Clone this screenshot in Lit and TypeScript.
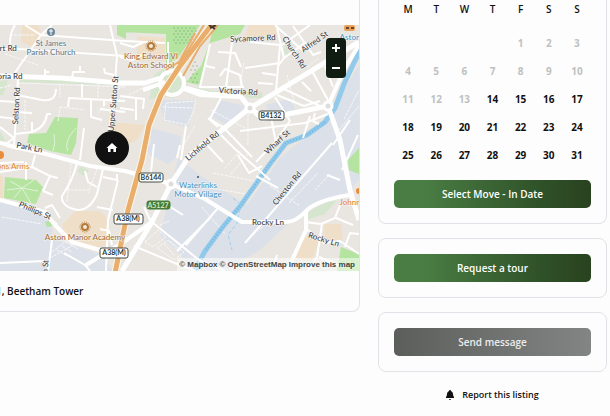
import { LitElement, html, css, svg } from "lit";
import { customElement } from "lit/decorators.js";

const WEEKDAYS = ["M", "T", "W", "T", "F", "S", "S"];
const FIRST_OFFSET = 4;
const FIRST_AVAILABLE = 14;
const weeks: (number | null)[][] = Array.from({ length: 5 }, (_, w) =>
  Array.from({ length: 7 }, (_, d) => {
    const n = w * 7 + d - FIRST_OFFSET + 1;
    return n > 0 ? n : null;
  })
);

const MINOR_ROADS = [
  "M15 25Q9 34 10 49M25 25L41 35L125 41L165 43M52 25L41 35L14 74M0 49L18 49L125 56",
  "M110 25L117 56L115 83L109 132M45 79V69M45 72H49M72 79L73 72H85M80 72V66M114 75L105 73L104 68",
  "M18 77L17 100L14 147M17 95L42 100Q56 102 56 89M16 112L32 113M0 117L16 119M0 101L17 102M15 134L32 132Q45 128 47 114H51M32 132V122M0 127L14 138L6 144",
  "M68 107L69 98L125 101M82 97V84M91 117V99M104 99V106M102 120L91 117M84 128L80 160M125 112L100 109",
  "M35 155L32 167L0 172M32 167L50 176L43 191M50 176L58 178M43 191L53 195M77 163Q73 180 62 196Q61 207 78 210Q90 210 97 194L103 169M85 171L88 182L97 187M103 177L117 180V174M97 207L113 210M0 163L24 162M26 162V180",
  "M45 208L52 205L60 218M52 240L48 271M0 263L45 261M64 253L85 265L90 271M43 214L57 224M100 229L109 231L112 245M118 180L108 220L106 271",
  "M168 42V75M120 57L132 60L144 54M120 43L133 47L144 42M120 96L144 99L143 109M136 98V120M120 108L134 110M154 144L150 181M186 126L181 160",
  "M210 44L200 87H244M206 66L215 68M218 52L235 53L241 67M225 95L233 35M220 76L225 69L240 75L242 87M250 42L280 45L276 91M245 68L280 63M282 45L310 25M258 83L273 84M262 73L276 75",
  "M277 28L284 58L278 66M293 26L313 55L321 52M301 48L313 45M284 58L306 42M325 66L333 87M312 71L329 102M277 95L304 106L320 101M284 89L322 107M302 82L311 91M275 97L290 121M240 131L305 123L328 114M315 113L313 121L319 124",
  "M221 98L210 119L227 130M208 118L218 127M186 160L246 112M221 135L235 149L270 180M222 126L252 157M270 112L276 143M290 121L275 142L256 162M310 116L303 138",
  "M161 201L183 215M152 222L199 260L225 271M134 246L177 264L196 271M177 251L210 218M186 245L218 208M144 207L152 224M180 145L177 158M207 145L223 162M238 155L249 173L262 166M256 176L278 188",
  "M305 222L321 224L335 218L340 205M336 218L353 225M322 224L317 257L308 271M345 247L350 233L359 234M319 257L340 266M308 230L324 243L340 241L359 254M272 271L277 255M340 180L327 175M350 120L333 145M342 170L358 135"
];

const PATHS = [
  "M18 83L125 87M60 84V97M98 83V97M60 107L85 110M58 121L60 107M122 85L98 113M0 88L13 85M25 100V130M5 54L38 65M10 35H35M125 97L147 86",
  "M166 103L196 101L193 113L187 125L164 120ZM163 107L192 108M211 110L245 128M195 126L181 149M248 106V145M240 85L244 63M287 75L294 101M308 67L318 58M344 119L359 90M339 130L360 105",
  "M145 242L158 230L166 237L153 247ZM157 248L168 240L184 252L174 260ZM164 244L175 256M169 241L180 253M160 225L169 221M240 151L224 169M248 154L230 175M213 173L254 181M210 188L247 194M202 207L225 234",
  "M52 252L69 239M50 258L75 244M57 250L67 256M62 246L72 252M66 242L78 249M71 163L67 202M97 169L88 193M67 190H88M7 147L20 150M2 217L42 224M270 186L300 206M289 203L318 173M315 190L330 174M268 222L245 242"
];

@customElement("area-map")
class AreaMap extends LitElement {
  static styles = css`
    :host { display: block; position: relative; height: 246px; overflow: hidden; }
    svg { display: block; }
    .map { width: 100%; height: 100%; font-family: Lato, "Liberation Sans", sans-serif; font-size: 8px; font-weight: 500; }
    .minor { fill: none; stroke: #fff; stroke-width: 2; stroke-linejoin: round; }
    .path { fill: none; stroke: #f8f8f7; stroke-width: 1; stroke-dasharray: 3 1; }
    .mid { fill: none; stroke: #fff; stroke-width: 4; stroke-linejoin: round; }
    .major { fill: none; stroke: #fff; stroke-width: 5; stroke-linejoin: round; }
    .case { fill: none; stroke: #fff8e9; stroke-width: 7; }
    .motorway { fill: none; stroke: #e9ad6c; stroke-width: 5; }
    .slip { fill: none; stroke: #e9ad6c; stroke-width: 2; }
    .water { fill: none; stroke: #92caeb; stroke-width: 5; stroke-linejoin: round; }
    .ripple { fill: none; stroke: #70b4df; stroke-width: 2; stroke-dasharray: 1 2; }
    .park { fill: #b5e4a0; }
    .grass { fill: #d5e5ce; }
    .school { fill: #f0dfc8; }
    .works { fill: #dce1e9; }
    .label { fill: #3e4145; stroke: #f8f8f6; stroke-width: 1; paint-order: stroke; text-anchor: middle; }
    .church { fill: #607c91; }
    .place { fill: #a66b35; }
    .pub { fill: #df8635; }
    .blue { fill: #4b96c7; }
    .shield { fill: #fff; stroke: #424c44; stroke-width: 1; }
    .green { fill: #427c39; stroke: #427c39; }
    .code { font-size: 7px; font-weight: 700; fill: #2c382f; text-anchor: middle; }
    .code-light { fill: #d6e9be; }
    .zoom { position: absolute; top: 13px; right: 13px; width: 20px; display: grid; border-radius: 4px; overflow: hidden; background: #101c12; }
    .zoom button { height: 20px; padding: 0; border: 0; background: none; display: grid; place-items: center; }
    .zoom svg { width: 10px; height: 10px; stroke: #fff; stroke-width: 2; }
    .credit { position: absolute; right: 0; bottom: 0; display: flex; gap: 2px; padding: 0 4px 0 2px; background: rgba(255,255,255,.5); font: 700 8px/13px "Liberation Sans", sans-serif; white-space: nowrap; }
    .credit a { color: #404642; text-decoration: none; }
  `;

  render() {
    return html`
      <svg class="map" viewBox="-20 25 379 246" preserveAspectRatio="xMaxYMid slice" role="img" aria-label="Map of Aston">
        <rect x="-20" y="25" width="400" height="246" fill="#e9e6e1"></rect>
        <path class="works" d="M0 201L45 215L53 230L50 240L70 253L105 266V271H-20V201ZM158 100H195L188 128L165 121ZM151 128L181 136L180 152L150 148ZM220 100L245 106L228 126L211 116ZM178 158L210 182L250 207L240 240L230 271H196L160 235ZM359 65V180L345 195L310 206L290 222L260 250L225 271L210 250L245 208L280 158L320 125L335 105ZM265 105L290 99L298 114L275 118Z"></path>
        <path class="works" d="M145 145L178 146L176 158L168 164L150 155ZM20 228L102 255L113 271H0V205Z"></path>
        <path class="school" d="M22 25H38L43 35L34 48L21 42ZM137 36L165 38V61H137ZM75 211L100 211L108 219L106 245L90 250L65 235L62 225ZM110 122L145 125L137 140L122 147L111 138ZM324 224H341L343 239L325 243ZM303 236L320 241L311 262L294 257ZM249 25H276L280 34L244 38ZM0 175L3 177V199H0Z"></path>
        <path class="park" d="M120 25H200L178 58L166 65V34L120 32ZM201 66L209 45L214 25H245L240 34L210 43L199 85L186 82ZM55 117L78 118L76 143L71 155L50 151L27 143L29 134L46 133ZM5 177L36 180L43 187L36 204L4 198ZM117 25H126V39L117 35ZM45 222L52 220L54 226L47 227ZM359 148V174L349 170L348 160ZM341 247L359 254V271H337Z"></path>
        <path class="grass" d="M154 75L169 65L184 73L188 87L174 98L160 96L149 100L151 91ZM309 211L329 201H336L325 214L307 220ZM20 79H110V85L20 82ZM0 81L8 80L3 95H0ZM193 87L215 91H244V96L205 96ZM285 42L292 48L289 57L284 53ZM82 166L89 171L83 176L77 171ZM0 131L5 140L0 145ZM244 92H262V98H247Z"></path>
        <path d="M10 181L22 188L38 191M14 198L22 188L34 180M7 190L22 188L31 203M53 151Q56 143 54 134M68 151Q63 142 76 128" fill="none" stroke="#e1f1d8"></path>
        <g fill="#568d51" opacity=".6">
          ${[0, 1, 2, 3, 4, 5].map(r => [0, 1, 2, 3, 4, 5].map(c => svg`<circle cx=${174 + c * 4 + (r % 2) * 2} cy=${28 + r * 3} r=".7"></circle>`))}
          ${[0, 1, 2, 3, 4, 5].map(r => [0, 1].map(c => svg`<circle cx=${191 + c * 4 + (r % 2) * 2} cy=${62 + r * 4} r=".7"></circle>`))}
        </g>
        ${PATHS.map(d => svg`<path class="path" d=${d}></path>`)}
        <path class="water" d="M362 46L353 65L344 84L335 108L325 122L307 135L286 143L270 164L241 205L222 228L205 251L193 274"></path>
        <path class="ripple" d="M325 122L307 135L286 143L270 164L241 205L222 228L205 251"></path>
        <path d="M233 198L241 205M240 209L237 223L228 235L232 250" fill="none" stroke="#9ed1ef" stroke-width="1" stroke-dasharray="4 2"></path>
        ${MINOR_ROADS.map(d => svg`<path class="minor" d=${d}></path>`)}
        <path class="mid" d="M-20 137L15 147L46 154L90 166L125 171L171 184L205 199L242 222H286Q296 222 306 211Q317 200 350 195M306 211V230L287 271M-20 195L0 200L45 212L54 224L72 242L100 250M165 82L143 90M152 222L122 243L86 265M328 106L335 90L345 68L359 45M184 89L200 95L239 97"></path>
        <path class="minor" d="M332 143L245 243M275 25L302 50"></path>
        <path class="major" d="M-20 75L0 76L60 78L120 83L145 83L160 78M184 88L208 94L240 96L250 108L190 155L171 184L152 222L122 271M250 108L359 42M250 108L263 119L328 106L340 140L350 190L359 220"></path>
        <circle cx="172" cy="83" r="12" fill="none" stroke="#fff" stroke-width="4"></circle>
        <path class="case" d="M213 23L180 66L161 95L149 125L142 160L128 210L115 273"></path>
        <path class="slip" d="M204 25L182 60L166 70M218 25L200 46L183 76M195 33L178 64"></path>
        <path class="motorway" d="M213 23L180 66L161 95L149 125L142 160L128 210L115 273"></path>
        ${[[250, 108], [328, 106], [171, 184]].map(([x, y]) => svg`<circle cx=${x} cy=${y} r="4" fill="#ddd" stroke="#fff" stroke-width="3"></circle>`)}
        <g class="label">
          <text class="church" x="51" y="46">St James</text><text class="church" x="51" y="55">Parish Church</text>
          <text x="6" y="51">ert Rd</text><text x="10" y="79">oria Rd</text>
          <text transform="translate(19 106) rotate(-87)">Selston Rd</text>
          <text transform="translate(116 104) rotate(-85)">Upper Sutton St</text>
          <text transform="translate(29 150) rotate(11)">Park Ln</text>
          <text transform="translate(34 213) rotate(23)">Phillips St</text>
          <text transform="translate(48 267) rotate(-85)">n St</text>
          <text class="place" x="151" y="59">King Edward VI</text><text class="place" x="151" y="68">Aston School</text>
          <text class="place" x="85" y="240">Aston Manor Academy</text>
          <text class="pub" x="13" y="169">ons Arms</text>
          <text transform="translate(253 41) rotate(-2)">Sycamore Rd</text>
          <text transform="translate(292 54) rotate(57)">Church Rd</text>
          <text transform="translate(316 44) rotate(-35)">Alfred St</text>
          <text transform="translate(238 94) rotate(4)">Victoria Rd</text>
          <text transform="translate(204 148) rotate(-40)">Lichfield Rd</text>
          <text transform="translate(279 144) rotate(-43)">Wharf St</text>
          <text transform="translate(289 190) rotate(-51)">Cheston Rd</text>
          <text x="268" y="225">Rocky Ln</text><text transform="translate(323 242) rotate(17)">Rocky Ln</text>
          <text class="blue" x="198" y="188">Waterlinks</text><text class="blue" x="198" y="197">Motor Village</text>
          <text class="blue" x="350" y="40">Aston</text><text class="pub" x="350" y="205">Johnn</text>
        </g>
        <rect class="shield" x="259" y="111" width="25" height="9" rx="2"></rect><text class="code" x="271" y="118">B4132</text>
        <rect class="shield" x="139" y="173" width="24" height="9" rx="2"></rect><text class="code" x="151" y="180">B6144</text>
        <rect class="shield green" x="147" y="201" width="23" height="8" rx="2"></rect><text class="code code-light" x="158" y="208">A5127</text>
        <rect class="shield" x="114" y="214" width="29" height="10" rx="2"></rect><text class="code" x="128" y="221">A38(M)</text>
        <rect class="shield" x="100" y="248" width="28" height="10" rx="2"></rect><text class="code" x="114" y="255">A38(M)</text>
        <g fill="#f5ead7" stroke="#b37a3e" stroke-width="2">
          <circle cx="151" cy="46" r="3"></circle><circle cx="85" cy="227" r="3"></circle>
        </g>
        <g fill="none" stroke="#b37a3e" stroke-dasharray="1 1"><circle cx="151" cy="46" r="5"></circle><circle cx="85" cy="227" r="5"></circle></g>
        <circle cx="51" cy="32" r="4" fill="#6e8799"></circle><path d="M51 29V35M49 31H53" stroke="#fff"></path>
        <circle cx="0" cy="155" r="4" fill="#e98b39"></circle><circle cx="359" cy="191" r="3" fill="#e98b39"></circle>
        <rect x="344" y="25" width="11" height="6" rx="2" fill="#e9a15a"></rect><path d="M346 28H349M351 28H354" stroke="#694527" stroke-width="2"></path>
        <path d="M209 25L215 29M210 28L216 25" stroke="#49372a" stroke-width="2"></path>
        <rect x="197" y="176" width="2" height="2" fill="#667681"></rect>
        <circle cx="112" cy="148" r="17" fill="#111"></circle>
        <path d="M106.500 148L112 143L117.500 148H116V152H113.400V149H110.600V152H108V148Z" fill="#fff"></path>
      </svg>
      <div class="zoom">
        <button aria-label="Zoom in"><svg viewBox="0 0 10 10"><path d="M5 1V9M1 5H9"></path></svg></button>
        <button aria-label="Zoom out"><svg viewBox="0 0 10 10"><path d="M1 5H9"></path></svg></button>
      </div>
      <div class="credit"><a href="#">© Mapbox</a><a href="#">© OpenStreetMap</a><a href="#">Improve this map</a></div>
    `;
  }
}

@customElement("app-root")
class AppRoot extends LitElement {
  static styles = css`
    * { box-sizing: border-box; }
    :host {
      display: grid; grid-template-columns: minmax(0, 1fr) 229px; gap: 18px; align-items: start;
      min-height: 100vh; padding-right: 3px; overflow: hidden; background: #fdfdfd;
      font-family: "Open Sans", "Noto Sans", sans-serif; color: #111; box-sizing: border-box;
    }
    .place { margin-left: -20px; padding-top: 25px; border: 1px solid #e2e3e8; border-top: 0; border-radius: 0 0 8px 8px; overflow: hidden; }
    .address { margin: 0; padding: 10px 15px; font-size: 10px; line-height: 20px; font-weight: 600; }
    .side { display: grid; gap: 14px; }
    .card { padding: 15px; border: 1px solid #e2e3e8; border-radius: 8px; }
    .dates { padding-top: 0; border-top: 0; border-radius: 0 0 8px 8px; }
    .calendar { width: 100%; table-layout: fixed; border-collapse: collapse; margin-bottom: 11px; font-size: 10px; text-align: center; }
    th { height: 29px; padding: 0 0 11px; font-weight: 600; line-height: 18px; }
    td { height: 28px; padding: 0; font-weight: 700; }
    .day { width: 100%; height: 28px; padding: 0; border: 0; background: none; font: inherit; color: inherit; }
    .day:disabled { color: #bfc1c0; }
    .action { display: block; width: 100%; height: 28px; padding: 0; border: 0; border-radius: 5px; color: #fff; font: 600 10px/28px "Open Sans", "Noto Sans", sans-serif; background: linear-gradient(90deg, #4a7d43 15%, #2f5128 75%, #29421f); }
    .muted { color: #ececec; background: linear-gradient(90deg, #5c5e5c, #828583); }
    .report { display: flex; align-items: center; justify-content: center; gap: 8px; color: #111; font-size: 9px; line-height: 18px; font-weight: 600; text-decoration: none; }
    .bell { width: 8px; height: 10px; }
  `;

  render() {
    return html`
      <section class="place">
        <area-map></area-map>
        <p class="address">1, Beetham Tower</p>
      </section>
      <aside class="side">
        <div class="card dates">
          <table class="calendar">
            <thead><tr>${WEEKDAYS.map(d => html`<th scope="col">${d}</th>`)}</tr></thead>
            <tbody>
              ${weeks.map(w => html`<tr>${w.map(n => html`<td>${n ? html`<button class="day" ?disabled=${n < FIRST_AVAILABLE}>${n}</button>` : ""}</td>`)}</tr>`)}
            </tbody>
          </table>
          <button class="action">Select Move - In Date</button>
        </div>
        <div class="card"><button class="action">Request a tour</button></div>
        <div class="card"><button class="action muted">Send message</button></div>
        <a class="report" href="#">
          <svg class="bell" viewBox="0 0 8 10" fill="#111" aria-hidden="true"><path d="M4 0Q5 0 5 1Q7 2 7 4Q7 6 8 7V8H0V7Q1 6 1 4Q1 2 3 1Q3 0 4 0ZM3 9H5Q5 10 4 10Q3 10 3 9Z"></path></svg>
          Report this listing
        </a>
      </aside>
    `;
  }
}
